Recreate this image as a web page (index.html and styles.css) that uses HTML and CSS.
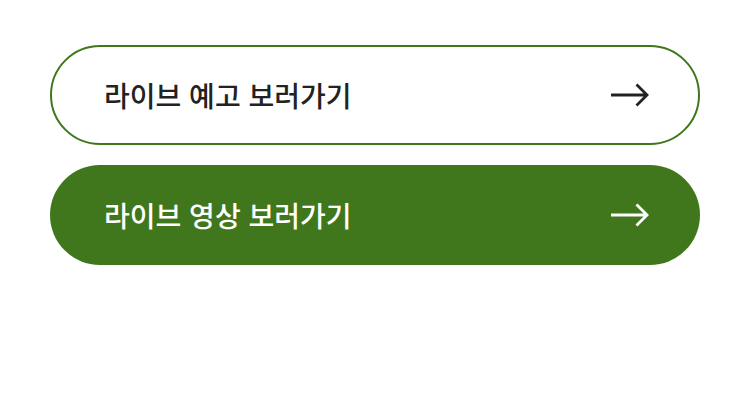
FILE: index.html
```html
<!DOCTYPE html>
<html lang="ko">
<head>
<meta charset="utf-8">
<link rel="stylesheet" href="styles.css">
</head>
<body>
<div class="list">
  <a class="btn btn-outline" href="#">
    <span class="label">라이브 예고 보러가기</span>
    <svg class="arrow" width="40" height="24" viewBox="0 0 40 24"><path d="M1 12H37M26.5 1.5L37 12L26.5 22.5" fill="none" stroke="currentColor" stroke-width="2.8"/></svg>
  </a>
  <a class="btn btn-solid" href="#">
    <span class="label">라이브 영상 보러가기</span>
    <svg class="arrow" width="40" height="24" viewBox="0 0 40 24"><path d="M1 12H37M26.5 1.5L37 12L26.5 22.5" fill="none" stroke="currentColor" stroke-width="2.8"/></svg>
  </a>
</div>
</body>
</html>
```
FILE: styles.css
```css
html, body { margin: 0; padding: 0; background: #fff; }
body { font-family: "Noto Sans CJK KR", "Noto Sans", sans-serif; }
.list {
  display: flex;
  flex-direction: column;
  gap: 20px;
  padding: 45px 50px 0 50px;
  width: 650px;
}
.btn {
  box-sizing: border-box;
  height: 100px;
  border-radius: 50px;
  display: flex;
  align-items: center;
  justify-content: space-between;
  padding: 0 50px 0 54px;
  text-decoration: none;
}
.btn-outline {
  border: 2px solid #3f781c;
  padding: 0 48px 0 52px;
  color: #222;
}
.btn-solid {
  background: #41771c;
  color: #fff;
}
.label {
  font-size: 28px;
  font-weight: 500;
  line-height: 1;
}
.arrow { display: block; }
```
